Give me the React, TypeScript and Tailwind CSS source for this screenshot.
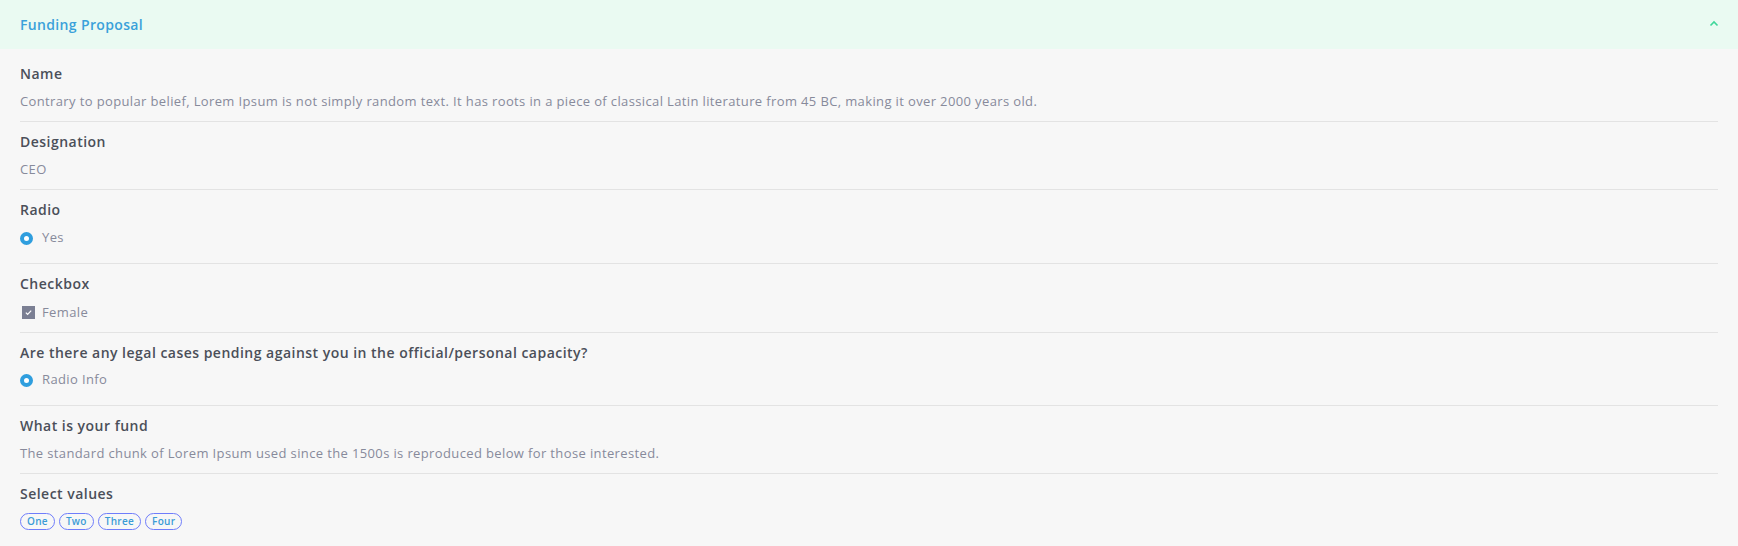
import React from "react";

const font = { fontFamily: '"Open Sans", "Noto Sans", sans-serif' };

function Row({ label, children, pb = "pb-[10px]", gap = "mt-[7px]" }: { label: string; children: React.ReactNode; pb?: string; gap?: string }) {
  return (
    <div className={`border-b border-[#e3e3e3] pt-[10px] ${pb}`}>
      <div className="text-[14px] leading-5 font-semibold tracking-[0.48px] text-[#4b4f59]">{label}</div>
      <div className={`${gap} text-[13px] leading-5 tracking-[0.37px] text-[#878a9b]`}>{children}</div>
    </div>
  );
}

function Radio({ text }: { text: string }) {
  return (
    <div className="flex items-center h-5">
      <span className="w-[13px] h-[13px] rounded-full border-[4px] border-[#2f9ede] bg-white mt-[3px]" />
      <span className="ml-[9px]">{text}</span>
    </div>
  );
}

export default function App() {
  return (
    <div className="min-h-screen bg-[#f7f7f7]" style={font}>
      <div className="h-[49px] bg-[#eafaf2] flex items-center justify-between pl-5 pr-[19px]">
        <span className="text-[14px] font-semibold tracking-[0.35px] text-[#3aa1da]">Funding Proposal</span>
        <svg width="10" height="7" viewBox="0 0 10 7" className="mb-[2px]">
          <path d="M1.5 5.5 L5 2 L8.5 5.5" fill="none" stroke="#3fd69a" strokeWidth="1.6" />
        </svg>
      </div>
      <div className="px-5 pt-[5px]">
        <Row label="Name">
          Contrary to popular belief, Lorem Ipsum is not simply random text. It has roots in a piece of classical Latin literature from 45 BC, making it over 2000 years old.
        </Row>
        <Row label="Designation">CEO</Row>
        <Row label="Radio" pb="pb-[16px]">
          <Radio text="Yes" />
        </Row>
        <Row label="Checkbox" gap="mt-[8px]">
          <div className="flex items-center h-5">
            <span className="ml-[2px] w-[13px] h-[13px] bg-[#7b7f93] flex items-center justify-center mt-[1px]">
              <svg width="9" height="9" viewBox="0 0 9 9">
                <path d="M1.8 4.6 L3.6 6.3 L7.2 2.6" fill="none" stroke="#ffffff" strokeWidth="1.2" />
              </svg>
            </span>
            <span className="ml-[7px]">Female</span>
          </div>
        </Row>
        <Row label="Are there any legal cases pending against you in the official/personal capacity?" pb="pb-[16px]" gap="mt-[6px]">
          <Radio text="Radio Info" />
        </Row>
        <Row label="What is your fund">
          The standard chunk of Lorem Ipsum used since the 1500s is reproduced below for those interested.
        </Row>
        <div className="pt-[10px]">
          <div className="text-[14px] leading-5 font-semibold tracking-[0.48px] text-[#4b4f59]">Select values</div>
          <div className="mt-[9px] flex gap-1">
            {["One", "Two", "Three", "Four"].map((v) => (
              <span
                key={v}
                className="h-[17px] px-[6px] rounded-full border border-[#6f7dfb] text-[10px] font-semibold tracking-[0.3px] text-[#3a9bd6] flex items-center"
              >
                {v}
              </span>
            ))}
          </div>
        </div>
      </div>
    </div>
  );
}
